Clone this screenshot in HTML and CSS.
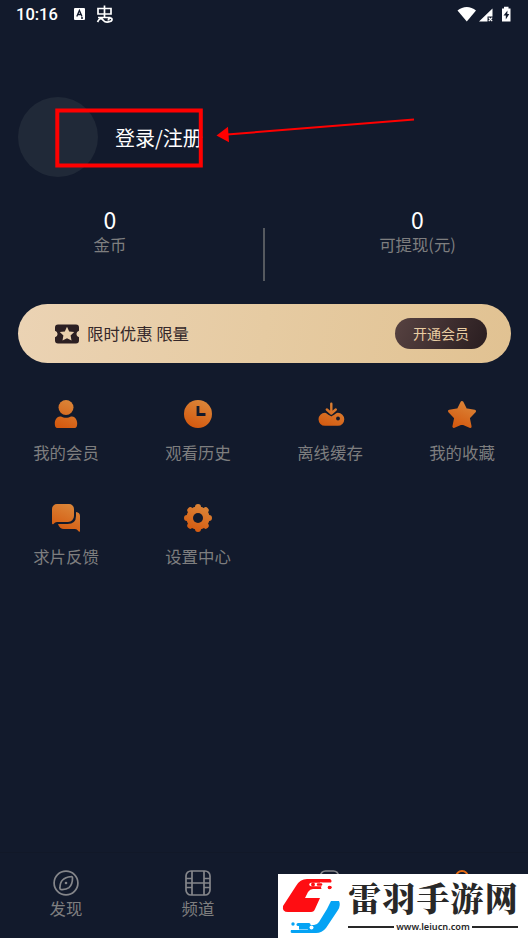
FILE: index.html
```html
<!DOCTYPE html>
<html lang="zh-CN">
<head>
<meta charset="utf-8">
<title>个人中心</title>
<link rel="stylesheet" href="styles.css">
</head>
<body>
<svg class="defs" width="0" height="0" aria-hidden="true">
  <defs>
    <linearGradient id="orange" gradientUnits="userSpaceOnUse" x1="20" y1="2" x2="9" y2="28">
      <stop offset="0" stop-color="#db8538"/><stop offset="1" stop-color="#d4590f"/>
    </linearGradient>
  </defs>
</svg>
<header class="status">
  <span class="time">10:16</span>
  <svg class="status-left" width="46" height="22" viewBox="0 0 46 22">
    <rect x="4" y="4" width="11" height="12" rx="1" fill="#fff"/>
    <path d="M6.800 12.500 9.400 6.500 12 12.500M7.800 10.500h3.200M11 14h2" fill="none" stroke="#121a2c" stroke-width="1.300"/>
    <path d="M28 4.500h13v5.500H28zM34.500 1.500v12M28 13.500h12.500M27.500 18c2-4 4-4.500 6-1.500 2 2.700 8.500 1.500 8.500-1 0-2.500-4-1.500-3.500 1" fill="none" stroke="#fff" stroke-width="1.700"/>
  </svg>
  <svg class="status-right" width="60" height="22" viewBox="0 0 60 22">
    <path d="M5.500 6.500c5.500-4.700 13-4.700 18.500 0L14.800 17.500z" fill="#fff"/>
    <path d="M40.500 4.500v8h-5V17.500H27z" fill="#fff"/>
    <path d="m36.700 13.700 3.500 3.500m0-3.500-3.500 3.500" stroke="#fff" stroke-width="1.200"/>
    <path d="M50 4.500h2V2.800h4.500v1.700h2v13H50z" fill="#fff"/>
    <path d="M55.500 6.500 51.500 11.500h2.300v4l3.500-5.500h-2z" fill="#121a2c"/>
  </svg>
</header>

<section class="profile">
  <div class="avatar"></div>
  <div class="login">登录/注册</div>
  <svg class="marker" width="370" height="70" viewBox="50 102 370 70">
    <rect x="57.300" y="110.500" width="143.500" height="55" fill="none" stroke="#f00" stroke-width="4"/>
    <path d="M414 119.500 227 134.500" stroke="#f00" stroke-width="2"/>
    <path d="m216.500 135.500 11.500-8.700 1 15.500z" fill="#f00"/>
  </svg>
</section>

<section class="wallet">
  <div class="amount"><b>0</b><span>金币</span></div>
  <i class="divider"></i>
  <div class="amount"><b>0</b><span>可提现(元)</span></div>
</section>

<section class="vip">
  <svg width="24" height="20" viewBox="0 0 24 20">
    <path d="M3 .5h18a3 3 0 0 1 3 3v3.200a3.400 3.400 0 0 0 0 6.600v3.200a3 3 0 0 1-3 3H3a3 3 0 0 1-3-3v-3.200a3.400 3.400 0 0 0 0-6.600V3.500a3 3 0 0 1 3-3z" fill="#2c1f22"/>
    <path d="m12 2.800 2.200 4.600 5 .7-3.600 3.500.9 5-4.500-2.400-4.500 2.400.9-5L4.800 8.100l5-.7z" fill="#ead0ad"/>
  </svg>
  <span class="offer">限时优惠 限量</span>
  <span class="open">开通会员</span>
</section>

<nav class="menu">
  <div class="item">
    <svg width="30" height="30" viewBox="0 0 30 30" fill="url(#orange)"><circle cx="15" cy="8.500" r="7.500"/><path d="M10 17.500c3 1.800 7 1.800 10 0 3.500-.8 6 2.500 6.200 6.500.1 3-.7 5-2.700 5H6.500c-2 0-2.800-2-2.700-5 .2-4 2.700-7.300 6.200-6.500z"/></svg>
    <span>我的会员</span>
  </div>
  <div class="item">
    <svg width="30" height="30" viewBox="0 0 30 30"><circle cx="15" cy="15" r="14" fill="url(#orange)"/><path d="M15 7v8.500h7.500" fill="none" stroke="#121a2c" stroke-width="2.800"/></svg>
    <span>观看历史</span>
  </div>
  <div class="item">
    <svg width="30" height="30" viewBox="0 0 30 30"><path d="M10 13.800c2 0 3 3 6.300 3s4-3 6.500-3a6.500 6.500 0 0 1 0 13H10a6.500 6.500 0 0 1 0-13z" fill="url(#orange)"/><path d="M16.300 4.800v9.500M11.800 10.500l4.500 4 4.500-4" fill="none" stroke="#121a2c" stroke-width="4.400"/><path d="M16.300 4.800v9.500M11.800 10.500l4.500 4 4.500-4" fill="none" stroke="url(#orange)" stroke-width="2.400" stroke-linecap="round" stroke-linejoin="round"/><circle cx="23" cy="19.500" r="1.900" fill="#121a2c"/></svg>
    <span>离线缓存</span>
  </div>
  <div class="item">
    <svg width="30" height="30" viewBox="0 0 30 30"><path d="m15 3.500 3.600 7.200 8.900 1.500-6.200 6.500 1.800 8.800-8.100-3.700-8.100 3.700 1.800-8.800-6.200-6.500 8.900-1.500z" fill="url(#orange)" stroke="url(#orange)" stroke-width="3" stroke-linejoin="round"/></svg>
    <span>我的收藏</span>
  </div>
  <div class="item">
    <svg width="30" height="30" viewBox="0 0 30 30" fill="url(#orange)"><path d="M6 1h12a5 5 0 0 1 5 5v7a6 6 0 0 1-6 6H6q-2 0-3.500 2Q1 22 1 20V6a5 5 0 0 1 5-5z"/><path d="M25 9q4 .5 4 4v15q0 1.500-1.500.2Q26 26 24 26H13q-4.500 0-6-5h9.500q8.500 0 8.500-8z"/></svg>
    <span>求片反馈</span>
  </div>
  <div class="item">
    <svg width="30" height="30" viewBox="0 0 30 30"><circle cx="15" cy="15" r="11.600" fill="url(#orange)"/><path d="M15 4v22M4 15h22M7.300 7.300l15.400 15.400M22.700 7.300 7.300 22.700" stroke="url(#orange)" stroke-width="6" stroke-linecap="round"/><circle cx="15" cy="15" r="5" fill="#121a2c"/></svg>
    <span>设置中心</span>
  </div>
</nav>

<footer class="tabs">
  <div class="tab">
    <svg width="26" height="26" viewBox="0 0 26 26" fill="none" stroke="#85868a" stroke-width="1.700"><circle cx="13" cy="13" r="11.900"/><path d="M18 6.700q1.600-.3 1.500 1.300c0 5-1.500 8-3.500 9.700-2 1.600-4.500 2-7.500 1.900q-1.700 0-1.600-1.700c.1-3.500.8-6 2.700-7.900s5-3 8.400-3.300z"/><circle cx="13" cy="13" r="1.300" fill="#85868a" stroke="none"/></svg>
    <span>发现</span>
  </div>
  <div class="tab">
    <svg width="26" height="26" viewBox="0 0 26 26" fill="none" stroke="#85868a" stroke-width="1.700"><rect x="1" y="1" width="24" height="24" rx="5"/><path d="M7 1v24M19 1v24M1 13h24M1 8.500h6M1 17.500h6M19 8.500h6M19 17.500h6"/></svg>
    <span>频道</span>
  </div>
  <div class="tab">
    <svg width="26" height="26" viewBox="0 0 26 26" fill="none" stroke="#85868a" stroke-width="1.700"><rect x="3.500" y="1" width="18" height="24" rx="5"/></svg>
  </div>
  <div class="tab">
    <svg width="26" height="26" viewBox="0 0 26 26" fill="none" stroke="#e56a12" stroke-width="1.900"><circle cx="13" cy="7" r="6"/></svg>
  </div>
</footer>

<aside class="brand">
  <svg width="64" height="64" viewBox="0 0 64 64">
    <path d="M52 5H29q-7 0-11 7L5 32q-1 6 5 6h23q3 0 4-3l5-11H27l3-6q2-3 5-3h17q3-1 1-3H42V8.500h11q1.500-2-1-3.500z" fill="#ff0d12"/>
    <path d="M33 10.500h11" stroke="#fff" stroke-width="3.500" stroke-linecap="round"/>
    <circle cx="35" cy="10.500" r="1.900" fill="#ff0d12"/>
    <path d="M40 10.500h3" stroke="#ff0d12" stroke-width="2.500" stroke-linecap="round"/>
    <path d="M45 13.500h4" stroke="#fff" stroke-width="4" stroke-linecap="round"/>
    <circle cx="51.500" cy="13.500" r="1.800" fill="#ff0d12"/>
    <path d="M53 27h8q2 4-1 9L48 54q-4 5-10 5H14q-2 0-1-3h17l-1-5h7q3 0 5-3l8-13z" fill="#05a3f4"/>
    <path d="M21 53.500h14" stroke="#05a3f4" stroke-width="4"/>
    <circle cx="33.500" cy="53.500" r="2" fill="#fff"/>
    <circle cx="15" cy="50" r="1.700" fill="#05a3f4"/><path d="M20 50.500h11" stroke="#05a3f4" stroke-width="3" stroke-linecap="round"/>
  </svg>
  <div class="brand-text">
    <strong>雷羽手游网</strong>
    <div class="site"><i></i><span>www.leiucn.com</span><i></i></div>
  </div>
</aside>
</body>
</html>
```
FILE: styles.css
```css
* { box-sizing: border-box; }
body {
  position: relative;
  display: flex;
  flex-direction: column;
  width: 528px;
  height: 938px;
  margin: 0;
  overflow: hidden;
  background: #121a2c;
  color: #7e7e7f;
  font: 400 16.400px/24px "Noto Sans CJK SC", sans-serif;
}
svg { display: block; flex: none; }
.defs { position: absolute; }
.status {
  display: flex;
  align-items: center;
  height: 30px;
  padding: 0 16px;
  color: #fff;
}
.time { width: 54px; font: 500 16.500px/30px Roboto, sans-serif; }
.status-left { margin-top: -1px; }
.status-right { margin: -1px 0 0 auto; }
.profile {
  position: relative;
  display: flex;
  align-items: center;
  gap: 17.500px;
  height: 80px;
  margin-top: 66.500px;
  padding-left: 17.500px;
}
.avatar { width: 80px; height: 80px; border-radius: 50%; background: #202938; }
.login { padding-top: 2px; color: #fff; font-size: 20px; line-height: 30px; }
.marker { position: absolute; left: 50px; top: 5px; }
.wallet {
  display: flex;
  justify-content: space-between;
  height: 82px;
  margin-top: 29.500px;
}
.amount { display: flex; flex-direction: column; align-items: center; width: 220px; }
.amount:last-child { width: 221px; }
.amount b { color: #fff; font: 400 23px/26px "Noto Sans CJK SC", sans-serif; }
.amount span { line-height: 24px; }
.divider { width: 2px; height: 53px; margin-top: 22px; background: #55595f; }
.vip {
  display: flex;
  align-items: center;
  height: 59px;
  margin: 16px 17.500px 0;
  padding: 0 23.500px 0 37.500px;
  border-radius: 30px;
  background: linear-gradient(100deg, #ebd3b4, #e6cba2 50%, #e1c292);
  color: #35282a;
}
.offer { margin: -2px 0 0 8px; }
.open {
  width: 92px;
  height: 31px;
  margin-left: auto;
  border-radius: 16px;
  background: linear-gradient(115deg, #574241, #291d20);
  color: #e9cda2;
  font-size: 14px;
  line-height: 31px;
  text-align: center;
}
.menu { display: grid; grid-template-columns: repeat(4, 132px); grid-auto-rows: 104px; margin-top: 36px; }
.item { display: flex; flex-direction: column; align-items: center; }
.item span { margin-top: 11px; }
.tabs {
  display: grid;
  grid-template-columns: repeat(4, 132px);
  height: 86px;
  margin-top: auto;
  padding-top: 17px;
  border-top: 1px solid #111828;
}
.tab { display: flex; flex-direction: column; align-items: center; }
.brand {
  position: absolute;
  right: 0;
  bottom: 0;
  display: flex;
  width: 250px;
  height: 64px;
  background: #fff;
  color: #282828;
}
.brand-text { width: 170px; margin-left: 6px; }
.brand strong {
  display: block;
  height: 47px;
  font: 900 33px/46px "Noto Serif CJK SC", "Noto Sans CJK SC", serif;
  letter-spacing: 1.200px;
  white-space: nowrap;
}
.site { display: flex; align-items: center; gap: 2px; height: 12px; font: 600 9.200px/12px "Noto Sans", sans-serif; }
.site i { flex: 1; height: 2px; background: #282828; }
```
